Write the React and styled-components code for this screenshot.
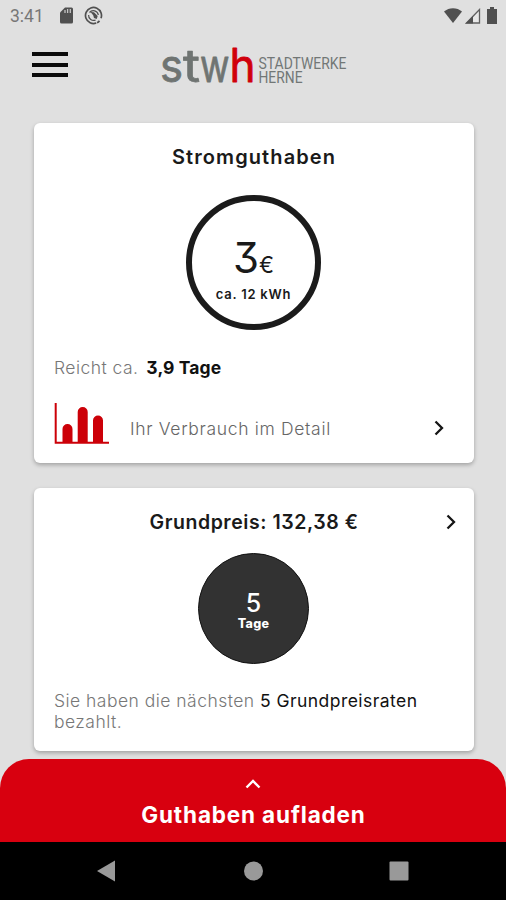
import React from 'react';
import styled, { createGlobalStyle } from 'styled-components';

const GlobalStyle = createGlobalStyle`
  * {
    box-sizing: border-box;
  }

  body {
    margin: 0;
    font-family: Inter, "Open Sans", sans-serif;
    font-feature-settings: "cv09";
  }
`;

const Screen = styled.div`
  display: flex;
  flex-direction: column;
  width: 506px;
  height: 900px;
  overflow: hidden;
  background: #e0e0e0;
`;

const StatusBar = styled.div`
  display: flex;
  align-items: center;
  flex: none;
  height: 31px;
  padding: 0 9px 0 10px;
`;

const Clock = styled.span`
  width: 50px;
  padding-top: 1px;
  color: #777;
  font-family: Roboto, sans-serif;
  font-size: 17.5px;
  line-height: 30px;
`;

const StatusIcons = styled.div`
  display: flex;
  align-items: center;
  gap: ${(props) => props.$gap};
  margin-left: ${(props) => (props.$right ? 'auto' : '0')};
`;

const Header = styled.header`
  display: flex;
  flex: none;
  height: 92px;
  padding: 3px 31px 0 32px;
  gap: 90px;
`;

const MenuButton = styled.button`
  display: flex;
  flex-direction: column;
  gap: 6.5px;
  width: 38px;
  height: 54px;
  padding: 18px 0 0;
  border: 0;
  background: none;
`;

const MenuLine = styled.span`
  width: 36px;
  height: 4px;
  background: #0c0c0c;
`;

const Content = styled.main`
  display: flex;
  flex-direction: column;
  flex: none;
  gap: 25px;
  height: 636px;
  padding: 0 32px 0 34px;
`;

const Card = styled.section`
  display: flex;
  flex-direction: column;
  flex: none;
  height: ${(props) => props.$height};
  padding: 0 20px;
  border-radius: 6px;
  background: #fff;
  box-shadow: 0 2px 4px rgba(0, 0, 0, 0.28);
`;

const CardHead = styled.div`
  display: grid;
  grid-template-columns: 10px 1fr 10px;
  align-items: center;
  height: 68px;
  margin: 0 -2px;
  padding-bottom: 1px;
`;

const CardTitle = styled.h2`
  grid-column: 2;
  margin: 1px 0 0;
  color: #1a1a1a;
  font-size: ${(props) => props.$size};
  font-weight: 600;
  line-height: 24px;
  letter-spacing: ${(props) => props.$spacing};
  text-align: center;
  white-space: nowrap;
`;

const Ring = styled.div`
  display: flex;
  flex-direction: column;
  align-items: center;
  align-self: center;
  width: 135px;
  height: 135px;
  margin: 4px 1px 0 0;
  padding-top: 32px;
  border: 6px solid #1b1b1b;
  border-radius: 50%;
  color: #1a1a1a;
`;

const Amount = styled.div`
  display: flex;
  align-items: baseline;
  height: 50px;
  font-size: 42px;
  line-height: 50px;
`;

const Currency = styled.span`
  font-size: 22.5px;
  font-weight: 400;
`;

const Energy = styled.div`
  margin-top: 3px;
  font-size: 13px;
  font-weight: 600;
  line-height: 16px;
  letter-spacing: 0.75px;
  white-space: nowrap;
`;

const Range = styled.p`
  display: flex;
  gap: 8px;
  margin: 27px 0 0;
  color: #777;
  font-size: 17.5px;
  font-weight: 300;
  line-height: 22px;
  letter-spacing: 0.45px;
`;

const Strong = styled.b`
  color: #111;
  font-weight: ${(props) => props.$weight};
  letter-spacing: ${(props) => props.$spacing};
`;

const DetailLink = styled.a`
  display: flex;
  align-items: center;
  height: 42px;
  margin-top: 24px;
  padding-right: 10px;
  color: #666;

  svg:last-child {
    margin-top: 8px;
  }
`;

const DetailLabel = styled.span`
  flex: 1;
  margin: 10px 0 0 20px;
  font-size: 17.5px;
  font-weight: 300;
  line-height: 22px;
  letter-spacing: 0.67px;
`;

const DaysBadge = styled.div`
  display: flex;
  flex-direction: column;
  align-items: center;
  align-self: center;
  width: 111px;
  height: 111px;
  margin: -3px 1px 0 0;
  padding-top: 35px;
  border: 1px solid #111;
  border-radius: 50%;
  background: #323232;
  color: #fff;
`;

const DaysCount = styled.span`
  font-size: 25px;
  font-weight: 500;
  line-height: 28px;
`;

const DaysUnit = styled.span`
  font-size: 12.5px;
  font-weight: 800;
  line-height: 14px;
  letter-spacing: 0.3px;
`;

const Note = styled.p`
  margin: 26px 0 0;
  color: #777;
  font-size: 17.5px;
  font-weight: 300;
  line-height: 21px;
  letter-spacing: 0.47px;
`;

const TopUp = styled.button`
  display: flex;
  flex-direction: column;
  align-items: center;
  flex: none;
  height: 83px;
  padding: 20px 0 0;
  border: 0;
  border-radius: 29px 29px 0 0;
  background: #d8000f;
  color: #fff;
  font-family: inherit;
`;

const TopUpLabel = styled.span`
  margin: 11px 0 0 1px;
  font-size: 22.5px;
  font-weight: 700;
  line-height: 30px;
  letter-spacing: 0.85px;
`;

const NavBar = styled.nav`
  display: flex;
  justify-content: space-between;
  align-items: center;
  flex: none;
  height: 58px;
  padding: 0 97px 0 97px;
  background: #000;

  circle,
  path,
  rect {
    fill: #999;
  }
`;

const SdCardIcon = () => (
  <svg width="14" height="17" viewBox="0 0 14 17">
    <path d="M5 .5h6.5a1.5 1.5 0 0 1 1.5 1.5v13a1.5 1.5 0 0 1-1.5 1.5h-10A1.5 1.5 0 0 1 0 15V5.500z" fill="#505050" />
    <path d="M5 3v3M7.600 2v4M10.300 2v4" stroke="#c4c4c4" strokeWidth="1.300" />
  </svg>
);

const SyncIcon = () => (
  <svg width="20" height="20" viewBox="0 0 20 20" fill="none" stroke="#505050">
    <circle cx="9.500" cy="9.500" r="8" strokeWidth="1.700" strokeDasharray="43 3 3 1.300" transform="rotate(70 9.500 9.500)" />
    <path d="M14.300 9A5 5 0 0 0 5.500 6.500M4.600 9a5 5 0 0 0 7 5" strokeWidth="1.200" />
    <path d="M6.500 6 10 6.300l3.700 3.600-1 3-2.700-.9-.8-2.700z" fill="#505050" stroke="none" />
  </svg>
);

const WifiIcon = () => (
  <svg width="18" height="15" viewBox="0 0 18 15">
    <path d="M0 3.500C5-1 13-1 18 3.500L9 15z" fill="#505050" />
  </svg>
);

const SignalIcon = () => (
  <svg width="16" height="16" viewBox="0 0 16 16">
    <path d="M1.500 15 14.500 1.500V15z" fill="#e8e8e8" stroke="#606060" strokeWidth="1.300" />
    <path d="M.5 15.500 8 8v7.500z" fill="#505050" />
  </svg>
);

const BatteryIcon = () => (
  <svg width="10" height="17" viewBox="0 0 10 17">
    <path d="M3 0h4v2h3v15H0V2h3z" fill="#505050" />
  </svg>
);

const Logo = () => (
  <svg width="190" height="64" viewBox="160 34 190 64" role="img" aria-label="Stadtwerke Herne">
    <g fontFamily="Inter, sans-serif" fontSize="46" fontWeight="400" strokeWidth="0.800" strokeLinejoin="round">
      <g fill="#6f7472" stroke="#6f7472">
        <text x="160" y="82" textLength="23" lengthAdjust="spacingAndGlyphs">s</text>
        <text x="183" y="82" textLength="17" lengthAdjust="spacingAndGlyphs">t</text>
        <text x="200" y="82" textLength="29.500" lengthAdjust="spacingAndGlyphs">w</text>
      </g>
      <text x="229.500" y="82" textLength="26" lengthAdjust="spacingAndGlyphs" fill="#d0000c" stroke="#d0000c">h</text>
    </g>
    <g fontFamily="Roboto, sans-serif" fontSize="16.500" fill="#727776">
      <text x="258.500" y="69" textLength="88" lengthAdjust="spacingAndGlyphs">STADTWERKE</text>
      <text x="258.500" y="83" textLength="44" lengthAdjust="spacingAndGlyphs">HERNE</text>
    </g>
  </svg>
);

const UsageIcon = () => (
  <svg width="56" height="42" viewBox="0 0 56 42">
    <path d="M1.700 0v39.700H55" fill="none" stroke="#cc0008" strokeWidth="2" />
    <path
      d="M8.500 39V26a5 5 0 0 1 10 0V39zM23.700 39V9a5 5 0 0 1 10 0V39zM39 39V17.500a5 5 0 0 1 10 0V39z"
      fill="#cc0008"
    />
  </svg>
);

const Chevron = () => (
  <svg width="10" height="16" viewBox="0 0 10 16">
    <path d="m1.500 1.500 6.500 6.500-6.500 6.500" fill="none" stroke="#151515" strokeWidth="2.300" />
  </svg>
);

const ChevronUp = () => (
  <svg width="16" height="10" viewBox="0 0 16 10">
    <path d="m1.500 8.500 6.500-6.500 6.500 6.500" fill="none" stroke="#fff" strokeWidth="2.400" />
  </svg>
);

const App = () => {
  return (
    <Screen>
      <GlobalStyle />

      <StatusBar>
        <Clock>3:41</Clock>
        <StatusIcons $gap="10px">
          <SdCardIcon />
          <SyncIcon />
        </StatusIcons>
        <StatusIcons $right $gap="3px">
          <WifiIcon />
          <SignalIcon />
          <span />
          <BatteryIcon />
        </StatusIcons>
      </StatusBar>

      <Header>
        <MenuButton aria-label="Menü">
          <MenuLine />
          <MenuLine />
          <MenuLine />
        </MenuButton>
        <Logo />
      </Header>

      <Content>
        <Card $height="340px">
          <CardHead>
            <CardTitle $size="20px" $spacing="1.1px">Stromguthaben</CardTitle>
          </CardHead>
          <Ring>
            <Amount>3<Currency>€</Currency></Amount>
            <Energy>ca. 12 kWh</Energy>
          </Ring>
          <Range>
            Reicht ca.
            <Strong $weight={700} $spacing="0.1px">3,9 Tage</Strong>
          </Range>
          <DetailLink>
            <UsageIcon />
            <DetailLabel>Ihr Verbrauch im Detail</DetailLabel>
            <Chevron />
          </DetailLink>
        </Card>

        <Card $height="263px">
          <CardHead>
            <CardTitle $size="19.5px" $spacing="0.55px">Grundpreis: 132,38 €</CardTitle>
            <Chevron />
          </CardHead>
          <DaysBadge>
            <DaysCount>5</DaysCount>
            <DaysUnit>Tage</DaysUnit>
          </DaysBadge>
          <Note>
            Sie haben die nächsten <Strong $weight={400} $spacing="0.45px">5 Grundpreisraten</Strong> bezahlt.
          </Note>
        </Card>
      </Content>

      <TopUp>
        <ChevronUp />
        <TopUpLabel>Guthaben aufladen</TopUpLabel>
      </TopUp>

      <NavBar>
        <svg width="20" height="22" viewBox="0 0 20 22">
          <path d="M0 11 18 .5v21z" />
        </svg>
        <svg width="20" height="20" viewBox="0 0 20 20">
          <circle cx="10.500" cy="10" r="9.500" />
        </svg>
        <svg width="20" height="20" viewBox="0 0 20 20">
          <rect x=".5" y=".5" width="19" height="19" rx="1" />
        </svg>
      </NavBar>
    </Screen>
  );
};

export default App;
